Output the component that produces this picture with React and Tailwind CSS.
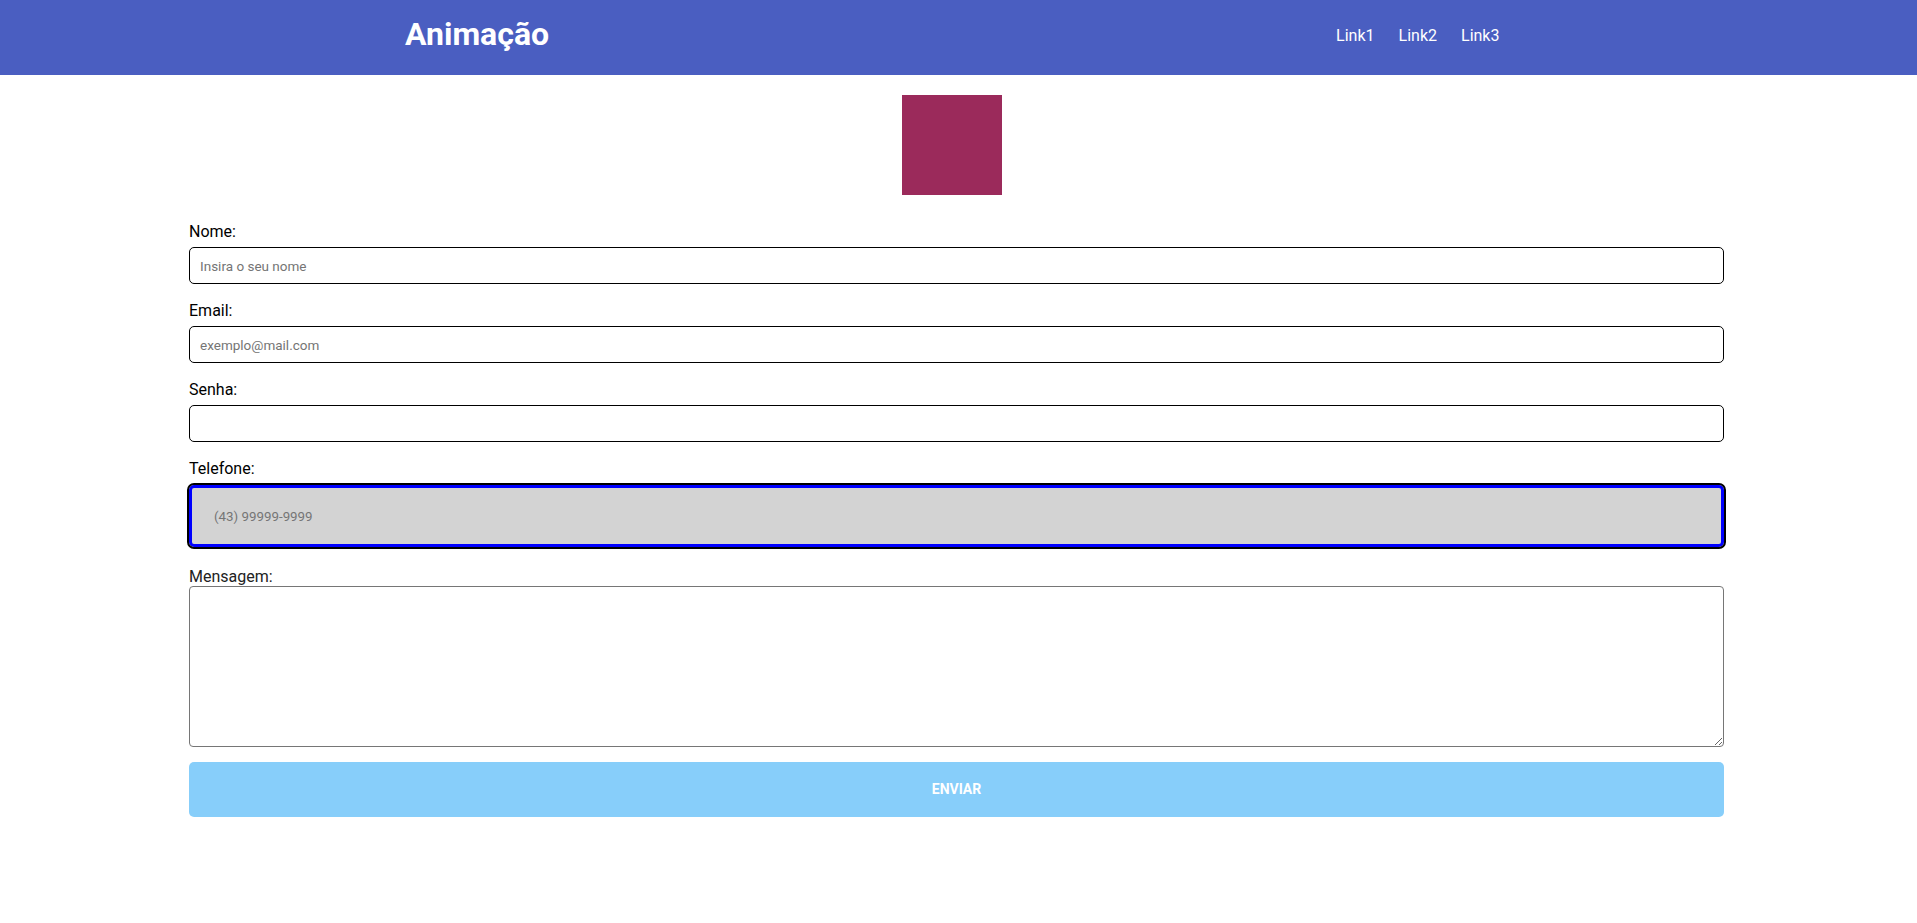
import React from 'react'

const fieldCls =
  'block w-full h-[37px] px-[10px] border border-black rounded-[5px] bg-white text-[13.5px] text-black placeholder:text-[#757575] outline-none'

function Field({ label, type = 'text', placeholder }) {
  return (
    <div className="mb-[17px]">
      <label className="block text-[16px] leading-[19px] text-black">{label}</label>
      <input type={type} placeholder={placeholder} className={'mt-[6px] ' + fieldCls} />
    </div>
  )
}

export default function App() {
  return (
    <div className="min-h-screen bg-white font-['Roboto',sans-serif]">
      {/* Top bar */}
      <header className="h-[75px] bg-[#4a5ec1] text-white flex items-start">
        <h1 className="ml-[405px] mt-[16px] text-[32px] leading-[37px] font-bold">Animação</h1>
        <nav className="ml-[787px] mt-[26px] flex gap-6 text-[16px] leading-[19px]">
          <a href="#">Link1</a>
          <a href="#">Link2</a>
          <a href="#">Link3</a>
        </nav>
      </header>

      {/* animated box */}
      <div className="ml-[902px] mt-[20px] w-[100px] h-[100px] bg-[#9b2a5b]" />

      <form className="ml-[189px] w-[1535px] mt-[27px]" onSubmit={(e) => e.preventDefault()}>
        <Field label="Nome:" placeholder="Insira o seu nome" />
        <Field label="Email:" type="email" placeholder="exemplo@mail.com" />
        <Field label="Senha:" type="password" />

        <div className="mb-[20px]">
          <label className="block text-[16px] leading-[19px] text-black">Telefone:</label>
          <input
            type="tel"
            placeholder="(43) 99999-9999"
            className="mt-[7px] block w-full h-[62px] px-[22px] border-[3px] border-[#0000ff] rounded-[5px] bg-[#d3d3d3] text-[13.33px] placeholder:text-[#757575] outline-2 outline-black outline-solid"
          />
        </div>

        <label className="block text-[16px] leading-[19px] text-[#222]">Mensagem:</label>
        <textarea className="block w-full h-[161px] border border-[#767676] rounded-[4px] bg-white text-[13.33px] resize-y" />

        <button
          type="submit"
          className="mt-[15px] w-full h-[55px] rounded-[5px] bg-[#87cefa] text-white text-[14px] font-bold"
        >
          ENVIAR
        </button>
      </form>
    </div>
  )
}
